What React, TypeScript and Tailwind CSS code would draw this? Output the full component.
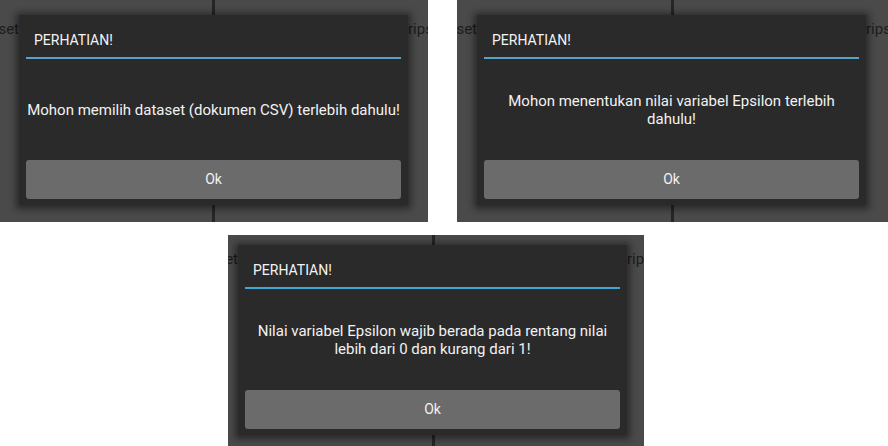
import React from "react";

type DialogProps = {
  lines: string[];
  lineColor: string;
};

function Dialog({ lines, lineColor }: DialogProps) {
  return (
    <div className="relative z-10 flex w-[389px] shrink-0 flex-col bg-[#2a2a2a] px-[7px] pb-[6px] shadow-[0_1px_7px_3px_rgba(0,0,0,0.45)]">
      <div className="flex h-[42px] items-start pl-[8px] pt-[16px] text-[14px] leading-[18px] text-[#f4f4f4]">
        PERHATIAN!
      </div>
      <div className={`h-[2px] w-full ${lineColor}`} />
      <div className="flex h-[101px] flex-col items-center justify-center text-center text-[15px] leading-[18px] text-[#f2f2f2]">
        {lines.map((l) => (
          <div key={l} className="whitespace-nowrap">
            {l}
          </div>
        ))}
      </div>
      <div className="flex h-[39px] items-center justify-center rounded-[3px] bg-[#6b6b6b] text-[14px] text-[#f2f2f2]">
        Ok
      </div>
    </div>
  );
}

type PanelProps = {
  width: string;
  height: string;
  left: string;
  right: string;
  pad: string;
  divider: string;
  leftText: string;
  rightText: string;
  lines: string[];
  lineColor: string;
};

function Panel({ width, height, left, right, pad, divider, leftText, rightText, lines, lineColor }: PanelProps) {
  return (
    <div className={`relative flex items-start overflow-hidden bg-[#4a4a4a] ${width} ${height} ${pad}`}>
      <div className={`absolute top-0 h-full w-[3px] bg-[#262626] ${divider}`} />
      <div className={`relative flex shrink-0 justify-end overflow-hidden pt-[4px] text-[15px] leading-[20px] text-[#1c1c1c] ${left}`}>
        <span className="whitespace-nowrap">{leftText}</span>
      </div>
      <Dialog lines={lines} lineColor={lineColor} />
      <div className={`relative flex shrink-0 justify-start overflow-hidden pt-[4px] text-[15px] leading-[20px] text-[#1c1c1c] ${right}`}>
        <span className="whitespace-nowrap">{rightText}</span>
      </div>
    </div>
  );
}

export default function App() {
  return (
    <div
      className="flex h-[446px] w-[888px] flex-col gap-[13px] overflow-hidden bg-white"
      style={{ fontFamily: "Roboto, 'Noto Sans', sans-serif" }}
    >
      <div className="flex h-[222px] justify-between">
        <Panel
          width="w-[428px]"
          height="h-[222px]"
          left="w-[19px]"
          right="w-[20px]"
          pad="pt-[15px]"
          divider="left-[212px]"
          leftText="set"
          rightText="rips"
          lines={["Mohon memilih dataset (dokumen CSV) terlebih dahulu!"]}
          lineColor="bg-[#5ba0c6]"
        />
        <Panel
          width="w-[431px]"
          height="h-[222px]"
          left="w-[20px]"
          right="w-[22px]"
          pad="pt-[15px]"
          divider="left-[214px]"
          leftText="set"
          rightText="rips"
          lines={["Mohon menentukan nilai variabel Epsilon terlebih", "dahulu!"]}
          lineColor="bg-[#5ba0c6]"
        />
      </div>
      <div className="ml-[228px] flex">
        <Panel
          width="w-[416px]"
          height="h-[211px]"
          left="w-[10px]"
          right="w-[17px]"
          pad="pt-[10px]"
          divider="left-[204px]"
          leftText="et"
          rightText="rip"
          lines={["Nilai variabel Epsilon wajib berada pada rentang nilai", "lebih dari 0 dan kurang dari 1!"]}
          lineColor="bg-[#3ea7d8]"
        />
      </div>
    </div>
  );
}
